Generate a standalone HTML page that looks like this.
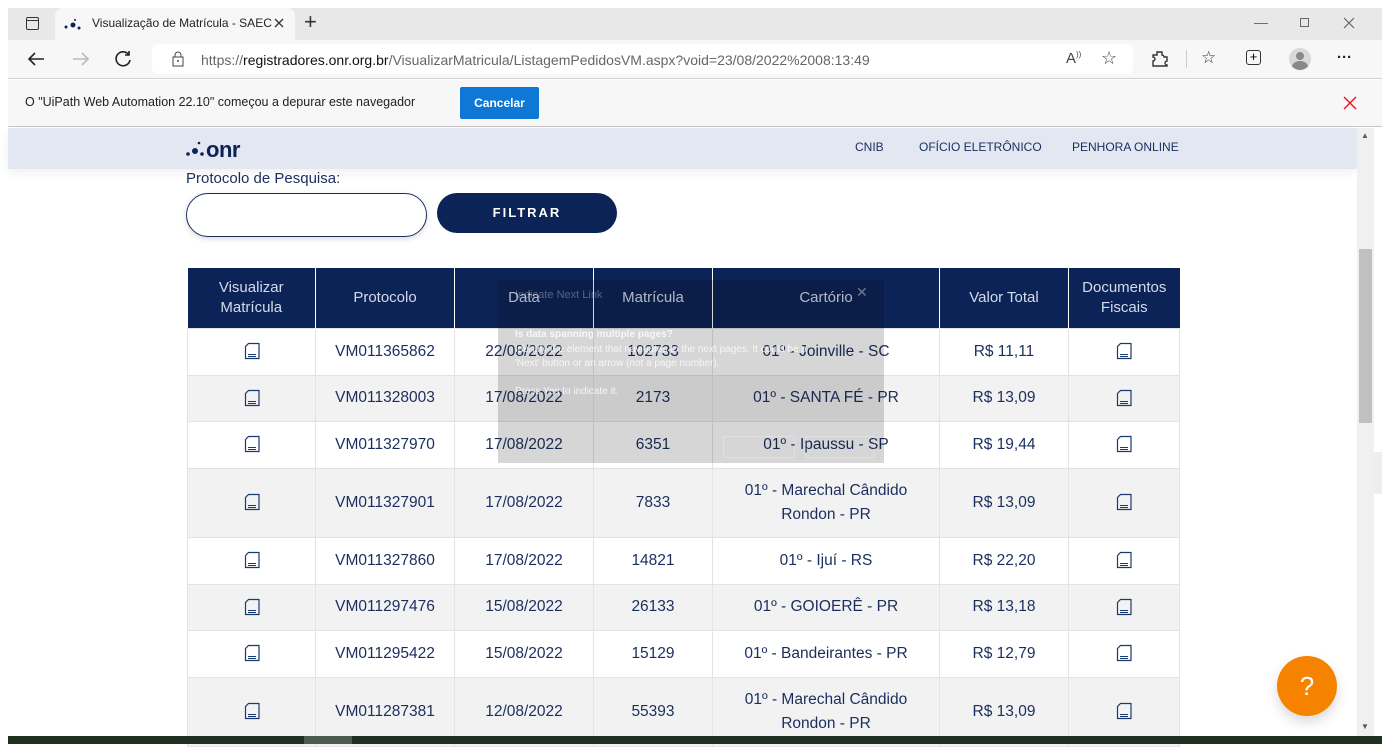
<!DOCTYPE html>
<html><head><meta charset="utf-8"><style>
*{margin:0;padding:0;box-sizing:border-box}
body{width:1382px;height:744px;overflow:hidden;background:#fff;font-family:"Liberation Sans",sans-serif;position:relative}
.a{position:absolute}
.tabbar{left:8px;top:8px;width:1374px;height:32px;background:#e8e8e8}
.tab{left:55px;top:8px;width:240px;height:34px;background:#f7f7f7;border-radius:8px 8px 0 0}
.addr{left:8px;top:40px;width:1374px;height:39px;background:#f7f7f7;border-bottom:1px solid #d0d0d0}
.url{left:152px;top:44px;width:981px;height:30px;background:#fff;border-radius:6px}
.info{left:8px;top:80px;width:1374px;height:47px;background:#f7f7f7;border-bottom:1px solid #c8c8c8}
.site{left:8px;top:128px;width:1349px;height:41px;background:#e3e7f1;box-shadow:0 4px 10px rgba(0,0,0,.06)}
.nav{top:140px;font-size:12px;color:#1a2e5e}
table{position:absolute;left:187px;top:268px;border-collapse:collapse}
th{background:#0c2357;color:#d4dbe8;font-weight:normal;height:60px;border-left:1px solid #fff;line-height:20px;font-family:"Liberation Sans",sans-serif;font-size:15px}
th:first-child{border-left:none}
td{color:#1a2e5e;text-align:center;border:1px solid #e2e2e8;font-family:"Liberation Sans",sans-serif;font-size:15.5px;line-height:24px}
tr.g td{background:#f2f2f2}
</style></head><body>
<div class="a tabbar"></div>
<div class="a" style="left:26px;top:17px;width:13px;height:13px;border:1.5px solid #333;border-radius:2px"></div>
<div class="a" style="left:26px;top:17px;width:13px;height:4px;border-bottom:1.5px solid #333"></div>
<div class="a tab"></div>
<svg class="a" style="left:64px;top:18px" width="18" height="12"><circle cx="2" cy="9" r="1.5" fill="#0c2357"/><circle cx="9" cy="7" r="2.5" fill="#0c2357"/><circle cx="15" cy="10" r="1.5" fill="#0c2357"/><circle cx="11" cy="2" r="1" fill="#0c2357"/></svg>
<div class="a" style="left:92px;top:16px;font-size:12px;color:#222">Visualização de Matrícula - SAEC</div>
<svg class="a" style="left:274px;top:18px" width="10" height="10"><path d="M1 1l8 8M9 1l-8 8" stroke="#333" stroke-width="1.3"/></svg>
<div class="a" style="left:304px;top:9px;font-size:22px;color:#333;font-weight:300">+</div>
<div class="a" style="left:1254px;top:14px;font-size:14px;color:#666">—</div>
<div class="a" style="left:1300px;top:18px;width:9px;height:9px;border:1px solid #666"></div>
<svg class="a" style="left:1343px;top:17px" width="12" height="12"><path d="M1 1l10 10M11 1L1 11" stroke="#666" stroke-width="1.2"/></svg>
<div class="a addr"></div>
<svg class="a" style="left:26px;top:50px" width="20" height="18"><path d="M18 9H3M9 3L3 9l6 6" stroke="#222" stroke-width="1.6" fill="none"/></svg>
<svg class="a" style="left:71px;top:50px" width="20" height="18"><path d="M2 9h15M11 3l6 6-6 6" stroke="#bbb" stroke-width="1.6" fill="none"/></svg>
<svg class="a" style="left:115px;top:50px" width="18" height="18"><path d="M14 5A7 7 0 1 0 15 10M14 1v4h-4" stroke="#222" stroke-width="1.6" fill="none"/></svg>
<div class="a url"></div>
<svg class="a" style="left:171px;top:51px" width="14" height="16"><rect x="2" y="6" width="10" height="9" stroke="#444" fill="none"/><path d="M4 6V4a3 3 0 0 1 6 0v2" stroke="#444" fill="none"/><circle cx="7" cy="10" r="1" fill="#444"/></svg>
<div class="a" style="left:201px;top:52px;font-size:14px;color:#666">https://<span style="color:#111">registradores.onr.org.br</span>/VisualizarMatricula/ListagemPedidosVM.aspx?void=23/08/2022%2008:13:49</div>
<div class="a" style="left:1066px;top:50px;font-size:15px;color:#444">A<sup style="font-size:8px">))</sup></div>
<div class="a" style="left:1101px;top:48px;font-size:18px;color:#444">☆</div>
<svg class="a" style="left:1151px;top:50px" width="18" height="18"><path d="M6 2h5v3a2 2 0 0 1 2 2h3v4a2 2 0 0 0 0 4v1H2v-5a2 2 0 0 0 0-4V5h4z" fill="none" stroke="#333" stroke-width="1.4"/></svg>
<div class="a" style="left:1186px;top:50px;width:1px;height:18px;background:#ccc"></div>
<div class="a" style="left:1201px;top:48px;font-size:17px;color:#333">☆</div>
<div class="a" style="left:1246px;top:50px;width:15px;height:15px;border:1.5px solid #333;border-radius:3px;font-size:13px;line-height:12px;text-align:center">+</div>
<div class="a" style="left:1289px;top:48px;width:22px;height:22px;border-radius:50%;background:#d8d8d8;overflow:hidden"><div class="a" style="left:7px;top:4px;width:8px;height:8px;border-radius:50%;background:#888"></div><div class="a" style="left:3px;top:13px;width:16px;height:12px;border-radius:50%;background:#888"></div></div>
<div class="a" style="left:1337px;top:49px;font-size:15px;color:#222;font-weight:bold">···</div>
<div class="a info"></div>
<div class="a" style="left:25px;top:95px;font-size:12.5px;color:#222">O "UiPath Web Automation 22.10" começou a depurar este navegador</div>
<div class="a" style="left:460px;top:87px;width:79px;height:32px;background:#0f78d4;border-radius:2px;color:#fff;font-size:12px;font-weight:bold;text-align:center;line-height:32px">Cancelar</div>
<svg class="a" style="left:1343px;top:96px" width="14" height="14"><path d="M1 1l12 12M13 1L1 13" stroke="#e81123" stroke-width="1.4"/></svg>
<div class="a site"></div>
<svg class="a" style="left:185px;top:138px" width="70" height="22"><circle cx="3" cy="16" r="1.8" fill="#0c2357"/><circle cx="10" cy="13" r="3" fill="#0c2357"/><circle cx="17" cy="16" r="1.8" fill="#0c2357"/><circle cx="14" cy="5" r="1.3" fill="#0c2357"/><text x="21" y="19" font-family="Liberation Sans" font-size="22" font-weight="bold" fill="#0c2357" letter-spacing="-0.5">onr</text></svg>
<div class="a nav" style="left:855px">CNIB</div>
<div class="a nav" style="left:919px">OFÍCIO ELETRÔNICO</div>
<div class="a nav" style="left:1072px">PENHORA ONLINE</div>
<div class="a" style="left:1357px;top:128px;width:17px;height:608px;background:#f0f0f0"></div>
<div class="a" style="left:1359px;top:249px;width:13px;height:174px;background:#c0c0c0"></div>
<div class="a" style="left:1361px;top:131px;font-size:8px;color:#555">▲</div>
<div class="a" style="left:1361px;top:722px;font-size:8px;color:#555">▼</div>
<div class="a" style="left:1374px;top:452px;width:8px;height:42px;background:#eee"></div>
<div class="a" style="left:186px;top:170px;font-size:15px;color:#1a2e5e">Protocolo de Pesquisa:</div>
<div class="a" style="left:186px;top:193px;width:241px;height:44px;border:1.3px solid #1a2e5e;border-radius:22px;box-shadow:0 2px 6px rgba(0,0,0,.15)"></div>
<div class="a" style="left:437px;top:193px;width:180px;height:40px;background:#0c2357;border-radius:20px;color:#fff;font-weight:bold;font-size:13px;letter-spacing:2px;text-align:center;line-height:40px">FILTRAR</div>
<table>
<tr><th style="width:128px">Visualizar<br>Matrícula</th><th style="width:139px">Protocolo</th><th style="width:139px">Data</th><th style="width:119px">Matrícula</th><th style="width:227px">Cartório</th><th style="width:129px">Valor Total</th><th style="width:111px">Documentos<br>Fiscais</th></tr>
<tr style="height:47px"><td>I</td><td>VM011365862</td><td>22/08/2022</td><td>102733</td><td>01º - Joinville - SC</td><td>R$ 11,11</td><td>I</td></tr>
<tr class="g" style="height:46px"><td>I</td><td>VM011328003</td><td>17/08/2022</td><td>2173</td><td>01º - SANTA FÉ - PR</td><td>R$ 13,09</td><td>I</td></tr>
<tr style="height:47px"><td>I</td><td>VM011327970</td><td>17/08/2022</td><td>6351</td><td>01º - Ipaussu - SP</td><td>R$ 19,44</td><td>I</td></tr>
<tr class="g" style="height:69px"><td>I</td><td>VM011327901</td><td>17/08/2022</td><td>7833</td><td>01º - Marechal Cândido<br>Rondon - PR</td><td>R$ 13,09</td><td>I</td></tr>
<tr style="height:47px"><td>I</td><td>VM011327860</td><td>17/08/2022</td><td>14821</td><td>01º - Ijuí - RS</td><td>R$ 22,20</td><td>I</td></tr>
<tr class="g" style="height:46px"><td>I</td><td>VM011297476</td><td>15/08/2022</td><td>26133</td><td>01º - GOIOERÊ - PR</td><td>R$ 13,18</td><td>I</td></tr>
<tr style="height:47px"><td>I</td><td>VM011295422</td><td>15/08/2022</td><td>15129</td><td>01º - Bandeirantes - PR</td><td>R$ 12,79</td><td>I</td></tr>
<tr class="g" style="height:69px"><td>I</td><td>VM011287381</td><td>12/08/2022</td><td>55393</td><td>01º - Marechal Cândido<br>Rondon - PR</td><td>R$ 13,09</td><td>I</td></tr>
</table>
<div class="a" style="left:498px;top:280px;width:386px;height:183px;background:#d6d6d6;mix-blend-mode:multiply"></div>
<div class="a" style="left:498px;top:280px;width:386px;height:183px;font-size:10px;color:rgba(255,255,255,.8);padding:8px 17px;line-height:14px">
<div style="color:rgba(255,255,255,.3);font-size:11px">Indicate Next Link</div>
<div style="font-weight:bold;margin-top:26px">Is data spanning multiple pages?</div>
<div style="margin-top:1px">Identify the element that navigates to the next pages. It could be a<br>'Next' button or an arrow (not a page number).</div>
<div style="margin-top:14px">Press Yes to indicate it.</div>
</div>
<div class="a" style="left:856px;top:284px;font-size:14px;color:rgba(255,255,255,.4)">✕</div>
<div class="a" style="left:723px;top:436px;width:72px;height:22px;border:1px solid rgba(255,255,255,.25)"></div>
<div class="a" style="left:805px;top:436px;width:70px;height:22px;border:1px solid rgba(255,255,255,.25)"></div>
<div class="a" style="left:1277px;top:656px;width:60px;height:60px;border-radius:50%;background:#f58300;color:#fff;font-size:26px;text-align:center;line-height:60px;box-shadow:0 6px 12px rgba(0,0,0,.15)">?</div>
<div class="a" style="left:8px;top:736px;width:1374px;height:8px;background:#1e3020"></div>
<div class="a" style="left:304px;top:736px;width:48px;height:8px;background:#4a5a4c"></div>
<script>
document.querySelectorAll('td').forEach(function(td){if(td.textContent==='I'){td.innerHTML='<svg width="16" height="18" style="vertical-align:middle"><path d="M4.5 1.5H15v15H1.5V4.5z" fill="none" stroke="#1a3a6e" stroke-width="1.2"/><path d="M4 12.5h8M4 14.5h8" stroke="#1a3a6e" stroke-width="1"/></svg>';}});
</script>
</body></html>
